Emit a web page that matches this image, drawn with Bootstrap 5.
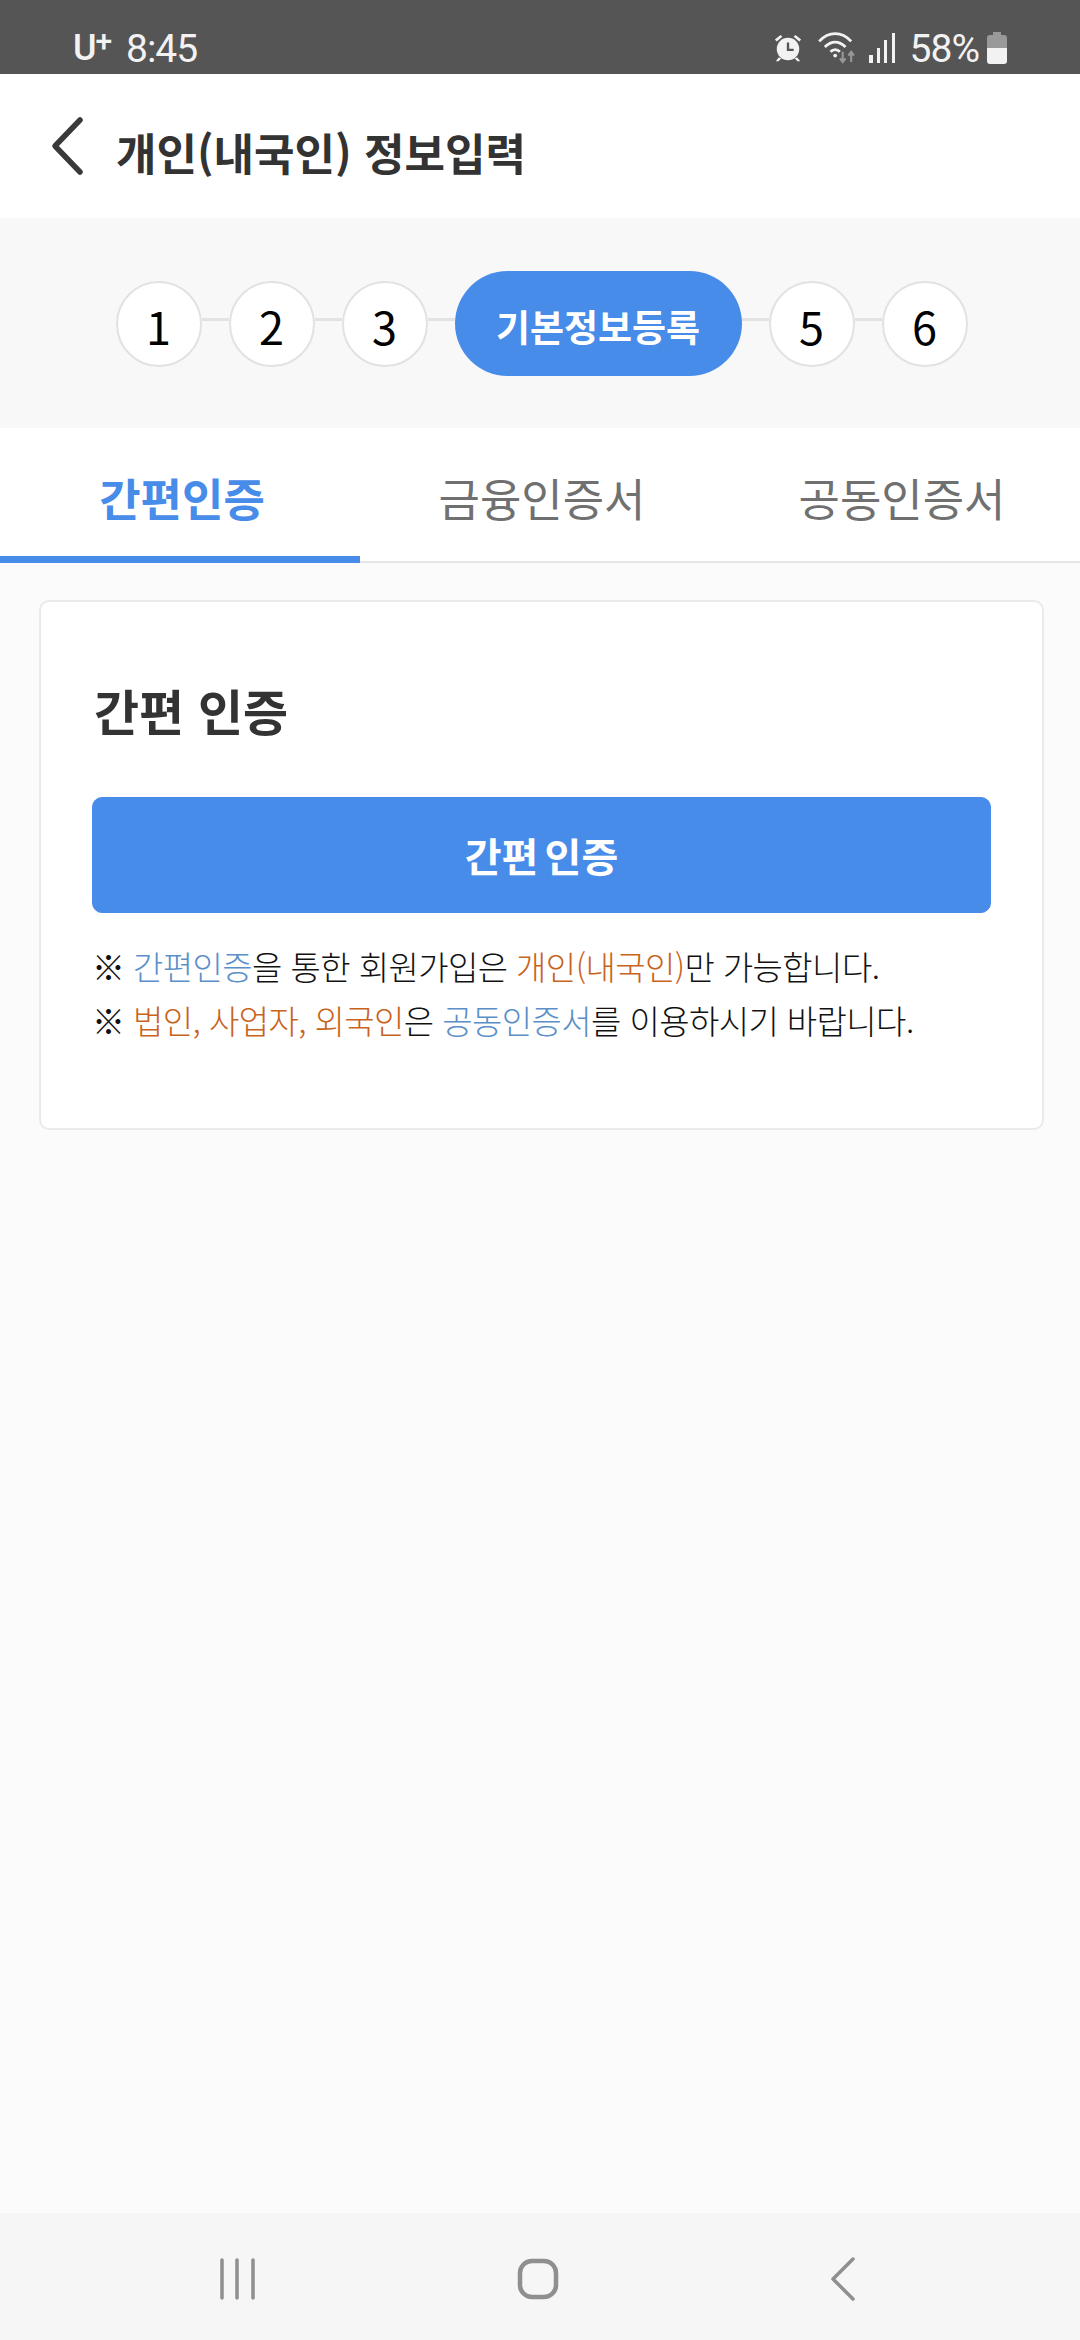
<!DOCTYPE html>
<html lang="ko">
<head>
  <meta charset="UTF-8" />
  <title>개인(내국인) 정보입력</title>
  <meta name="viewport" content="width=device-width, initial-scale=1">
  <link href="https://cdn.jsdelivr.net/npm/bootstrap@5.3.3/dist/css/bootstrap.min.css" rel="stylesheet">
  <style>
    html, body { height: 100%; }
    body { background: #fbfbfb; font-family: "Noto Sans CJK KR", "Noto Sans", sans-serif; color: #333; }
    .app-shell { height: 2340px; }

    .status-bar { height: 74px; background: #555; color: #f2f2f2; padding: 30px 72px 0 73px; font-family: Roboto, sans-serif; font-size: 39px; letter-spacing: -1px; line-height: 1; }
    .carrier { font-weight: 500; font-size: 36px; width: 53px; }
    .carrier sup { font-size: 30px; top: -9px; margin-left: 0; }
    .st-alarm { margin: 3px 15px 0 0; }
    .st-wifi { margin: 2px 11px 0 0; }
    .st-signal { margin: 3px 15px 0 0; }
    .st-batt { margin: 2px 0 0 7px; }

    .page-head { height: 144px; background: #fff; padding-left: 48px; }
    .page-title { font-size: 44px; font-weight: 700; margin: 13px 0 0 28px; color: #333; }

    .step-band { height: 210px; background: #f8f8f8; padding: 63px 0 0 3px; }
    .step-num { width: 86px; height: 86px; border: 2px solid #e2e2e2; background: #fff; border-radius: 50%; color: #000; font-size: 45px; line-height: 86px; }
    .step-line { width: 27px; height: 3px; background: #e2e2e2; margin-top: 37px; }
    .step-now { width: 287px; height: 105px; margin-top: -10px; background: #488ce9; color: #fff; border-radius: 53px; font-size: 37px; font-weight: 700; padding-top: 6px; }

    .tab-row { height: 135px; background: #fff; border-bottom: 2px solid #e6e6e6; }
    .tab-item { flex: 1 1 0; font-size: 45px; color: #707070; padding: 4px 0 0 4px; margin-bottom: -2px; }
    .tab-item.on { color: #488ce9; font-weight: 700; border-bottom: 7px solid #488ce9; padding-top: 11px; }

    .auth-box { margin: 37px 36px 0 39px; height: 530px; border: 2px solid #eaeaea; border-radius: 10px; background: #fff; padding: 0 51px; }
    .auth-title { font-size: 49px; font-weight: 700; color: #333; margin: 73px 0 0 2px; line-height: 70px; }
    .auth-btn { height: 116px; margin-top: 52px; background: #488ce9; border-color: #488ce9; color: #fff; font-size: 40px; font-weight: 700; word-spacing: -5px; border-radius: 10px; }
    .auth-note { font-size: 33px; font-weight: 300; line-height: 54px; color: #111; margin: 26px 0 0; letter-spacing: -0.6px; white-space: nowrap; }
    .txt-blue { color: #5b8fc9; }
    .txt-orange { color: #c8631c; }

    .sys-nav { height: 127px; background: #f6f6f6; margin-top: auto; padding: 4px 0 0 218px; }
    .nav-home { margin-left: 259px; }
    .nav-back { margin-left: 271px; }
  </style>
</head>
<body>
  <div class="app-shell d-flex flex-column">
    <div class="status-bar d-flex justify-content-between">
      <div class="d-flex">
        <span class="carrier">U<sup>+</sup></span>
        <span>8:45</span>
      </div>
      <div class="d-flex align-items-start">
        <svg class="st-alarm" width="30" height="30" viewBox="0 0 32 32" fill="#f2f2f2">
          <circle cx="16" cy="17" r="12"/>
          <path d="M2 7l6-5 2 2-6 5zM30 7l-6-5-2 2 6 5zM6 26l-3 4h3l3-3zM26 26l3 4h-3l-3-3z"/>
          <path d="M16 10v8h6" fill="none" stroke="#555" stroke-width="2.5"/>
        </svg>
        <svg class="st-wifi" width="40" height="32" viewBox="0 0 42 34" fill="none" stroke="#f2f2f2" stroke-width="3">
          <path d="M1 10c10-11 24-11 34 0M7 16c7-7 15-7 22 0M13 21c3-3 7-3 10 0"/>
          <circle cx="18" cy="25" r="2" fill="#f2f2f2" stroke="none"/>
          <path d="M26 21v11m-3-4l3 4 3-4M35 32V21m-3 4l3-4 3 4" stroke="#999" stroke-width="2.2"/>
        </svg>
        <svg class="st-signal" width="26" height="30" viewBox="0 0 26 30" fill="#f2f2f2">
          <rect x="0" y="22" width="4" height="8"/>
          <rect x="8" y="15" width="3" height="15"/>
          <rect x="15" y="7" width="3" height="23"/>
          <rect x="23" y="0" width="3" height="30"/>
        </svg>
        <span>58%</span>
        <svg class="st-batt" width="22" height="32" viewBox="0 0 22 32">
          <path d="M7 0h8v3h3q3 0 3 3v10H1V6q0-3 3-3h3z" fill="#999"/>
          <path d="M1 16h20v13q0 3-3 3H4q-3 0-3-3z" fill="#f2f2f2"/>
        </svg>
      </div>
    </div>

    <div class="page-head d-flex align-items-center">
      <svg width="40" height="60" viewBox="0 0 40 60" fill="none" stroke="#3a3a3a" stroke-width="5.5" stroke-linecap="round" stroke-linejoin="round">
        <path d="M32 4L7 30l25 26"/>
      </svg>
      <h1 class="page-title">개인(내국인) 정보입력</h1>
    </div>

    <div class="step-band d-flex justify-content-center align-items-start">
      <div class="step-num text-center">1</div>
      <div class="step-line"></div>
      <div class="step-num text-center">2</div>
      <div class="step-line"></div>
      <div class="step-num text-center">3</div>
      <div class="step-line"></div>
      <div class="step-now d-flex align-items-center justify-content-center">기본정보등록</div>
      <div class="step-line"></div>
      <div class="step-num text-center">5</div>
      <div class="step-line"></div>
      <div class="step-num text-center">6</div>
    </div>

    <div class="tab-row d-flex">
      <div class="tab-item on d-flex align-items-center justify-content-center">간편인증</div>
      <div class="tab-item d-flex align-items-center justify-content-center">금융인증서</div>
      <div class="tab-item d-flex align-items-center justify-content-center">공동인증서</div>
    </div>

    <div class="auth-box">
      <h2 class="auth-title">간편 인증</h2>
      <button type="button" class="btn auth-btn w-100">간편 인증</button>
      <p class="auth-note">
        ※ <span class="txt-blue">간편인증</span>을 통한 회원가입은 <span class="txt-orange">개인(내국인)</span>만 가능합니다.<br>
        ※ <span class="txt-orange">법인, 사업자, 외국인</span>은 <span class="txt-blue">공동인증서</span>를 이용하시기 바랍니다.
      </p>
    </div>

    <div class="sys-nav d-flex align-items-center">
      <svg width="40" height="42" viewBox="0 0 40 42" fill="none" stroke="#8f8f8f" stroke-width="3.5" stroke-linecap="round">
        <path d="M4 2v38M19 2v38M35 2v38"/>
      </svg>
      <svg class="nav-home" width="42" height="42" viewBox="0 0 42 42" fill="none" stroke="#8f8f8f" stroke-width="4.5">
        <rect x="3" y="3" width="36" height="36" rx="12"/>
      </svg>
      <svg class="nav-back" width="26" height="44" viewBox="0 0 26 44" fill="none" stroke="#8f8f8f" stroke-width="3.5" stroke-linecap="round" stroke-linejoin="round">
        <path d="M23 2L3 22l20 20"/>
      </svg>
    </div>
  </div>
  <script src="https://cdn.jsdelivr.net/npm/bootstrap@5.3.3/dist/js/bootstrap.bundle.min.js"></script>
</body>
</html>
